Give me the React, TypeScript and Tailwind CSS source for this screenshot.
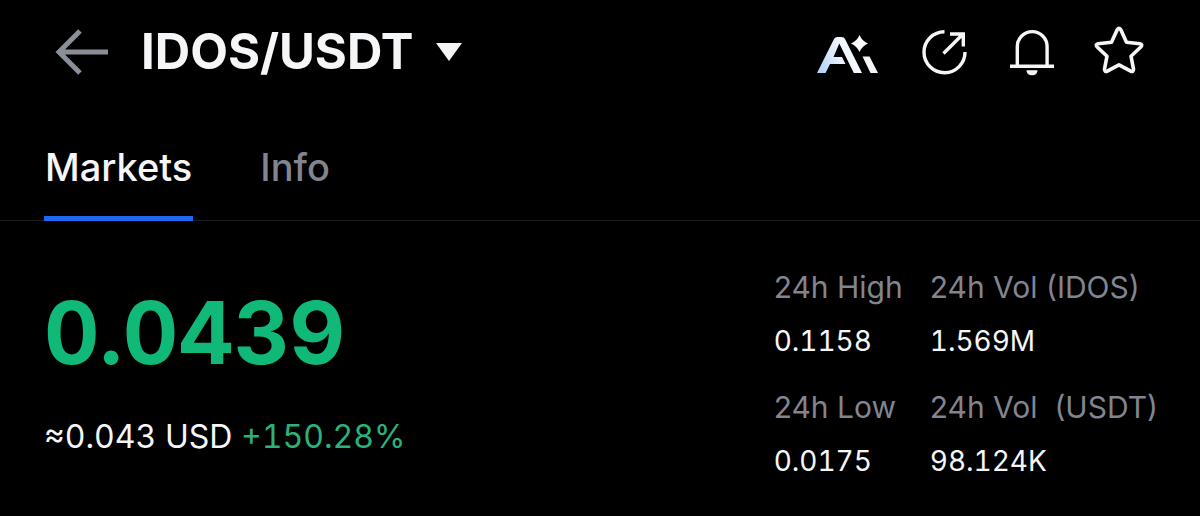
import { useState } from "react";

const tabs = ["Markets", "Info"];

const stats = [
  { label: "24h High", value: "0.1158" },
  { label: "24h Vol (IDOS)", value: "1.569M" },
  { label: "24h Low", value: "0.0175" },
  { label: "24h Vol  (USDT)", value: "98.124K" },
];

function BackIcon() {
  return (
    <svg width="54" height="46" viewBox="0 0 54 46" fill="none" stroke="#8b8f9a" strokeWidth="5" aria-hidden="true">
      <path d="M25 2 L4 23 L25 44 M4 23 H53" />
    </svg>
  );
}

function CaretIcon() {
  return (
    <svg width="28" height="18" viewBox="0 0 28 18" fill="#f5f6f8" aria-hidden="true">
      <path d="M1 0 H27 L14 18 Z" />
    </svg>
  );
}

function AiIcon() {
  return (
    <svg width="65" height="48" viewBox="0 -3 65 48" aria-hidden="true">
      <defs>
        <linearGradient id="ai-fill" x1="0" y1="0.7" x2="1" y2="0.4">
          <stop offset="0" stopColor="#b4d3fb" />
          <stop offset="0.5" stopColor="#e9f1fd" />
          <stop offset="1" stopColor="#ffffff" />
        </linearGradient>
      </defs>
      <path
        fill="url(#ai-fill)"
        d="M0 42 L17 8 Q18 6 20.500 6 H24.500 Q27 6 28 8 L45 42 H36.800 L22.300 12.500 L16.500 26 H25 L28.500 33 H13 L8.500 42 Z"
      />
      <path fill="#f4f6fa" d="M45.500 25.500 H52.500 L61 42 H53.500 Z" />
      <path fill="#ffffff" d="M42.500 4 Q45 10 51 12.500 Q45 15 42.500 21 Q40 15 34 12.500 Q40 10 42.500 4 Z" />
    </svg>
  );
}

function ShareIcon() {
  return (
    <svg width="46" height="48" viewBox="0 0 46 48" fill="none" stroke="#f5f6f8" strokeWidth="3.4" aria-hidden="true">
      <path d="M22.500 3.700 A20.500 20.500 0 1 0 43 24" />
      <path d="M21.500 25.500 L41 6 M28 6 H41.300 V18.500" />
    </svg>
  );
}

function BellIcon() {
  return (
    <svg width="46" height="48" viewBox="-1 0 46 48" fill="none" stroke="#f5f6f8" strokeWidth="3.400" aria-hidden="true">
      <path d="M8.300 38 V18.500 A14.900 14.900 0 0 1 38.100 18.500 V38" />
      <path d="M1 38.300 H45" />
      <path d="M17.500 42.300 H28.500 Q28.500 47.300 23 47.300 Q17.500 47.300 17.500 42.300 Z" fill="#f5f6f8" stroke="none" />
    </svg>
  );
}

function StarIcon() {
  return (
    <svg width="50" height="48" viewBox="0 0 50 48" overflow="visible" fill="none" stroke="#f5f6f8" strokeWidth="3.600" strokeLinejoin="round" aria-hidden="true">
      <path d="M23.300 1.500 Q25 -0.800 26.700 1.500 L32.500 14.300 L46 15.800 Q49 16.600 46.800 19 L37 28.200 L39.500 41.200 Q39.400 44.200 36.700 43.200 L25 36.800 L13.300 43.200 Q10.600 44.200 10.500 41.200 L13 28.200 L3.200 19 Q1 16.600 4 15.800 L17.500 14.300 Z" />
    </svg>
  );
}

export default function App() {
  const [active, setActive] = useState("Markets");

  return (
    <main className="min-h-screen bg-black font-['Inter',sans-serif] text-[#f5f6f8]">
      <header className="flex h-[104px] items-center justify-between pr-14 pl-[55px]">
        <div className="flex items-center gap-8">
          <button type="button" aria-label="Back">
            <BackIcon />
          </button>
          <button type="button" className="flex items-center gap-[21px]">
            <h1 className="text-[49px] leading-[60px] font-bold whitespace-nowrap">IDOS/USDT</h1>
            <CaretIcon />
          </button>
        </div>
        <div className="flex items-center gap-10">
          <button type="button" aria-label="AI assistant">
            <AiIcon />
          </button>
          <button type="button" aria-label="Share">
            <ShareIcon />
          </button>
          <button type="button" aria-label="Price alerts">
            <BellIcon />
          </button>
          <button type="button" aria-label="Add to favorites">
            <StarIcon />
          </button>
        </div>
      </header>

      <nav className="border-b border-[#1b1c20] px-11">
        <div role="tablist" className="-mb-px flex gap-[66px]">
          {tabs.map((tab) => (
            <button
              key={tab}
              type="button"
              role="tab"
              aria-selected={active === tab}
              onClick={() => setActive(tab)}
              className={
                active === tab
                  ? "border-b-[5px] border-[#1f66f2] px-px pt-[39px] pb-[25px] text-[38px] leading-[48px] font-medium"
                  : "border-b-[5px] border-transparent px-px pt-[39px] pb-[25px] text-[38px] leading-[48px] font-medium text-[#82858f]"
              }
            >
              {tab}
            </button>
          ))}
        </div>
      </nav>

      <section className="flex items-start justify-between pt-[45px] pr-[42px] pb-8 pl-11">
        <div>
          <p className="pt-[15px] text-[86px] leading-[104px] font-bold text-[#10b978] tabular-nums">0.0439</p>
          <p className="pt-[30px] text-[32px] leading-[44px] whitespace-nowrap tabular-nums">
            ≈0.043 USD <span className="text-[#2bb27c]">+150.28%</span>
          </p>
        </div>
        <dl className="grid grid-cols-[auto_auto] gap-x-[27px] gap-y-6">
          {stats.map((stat) => (
            <div key={stat.label} className="flex flex-col gap-3">
              <dt className="text-[30px] leading-[42px] whitespace-pre text-[#82858f]">{stat.label}</dt>
              <dd className="text-[28px] leading-[42px] tabular-nums">{stat.value}</dd>
            </div>
          ))}
        </dl>
      </section>
    </main>
  );
}
